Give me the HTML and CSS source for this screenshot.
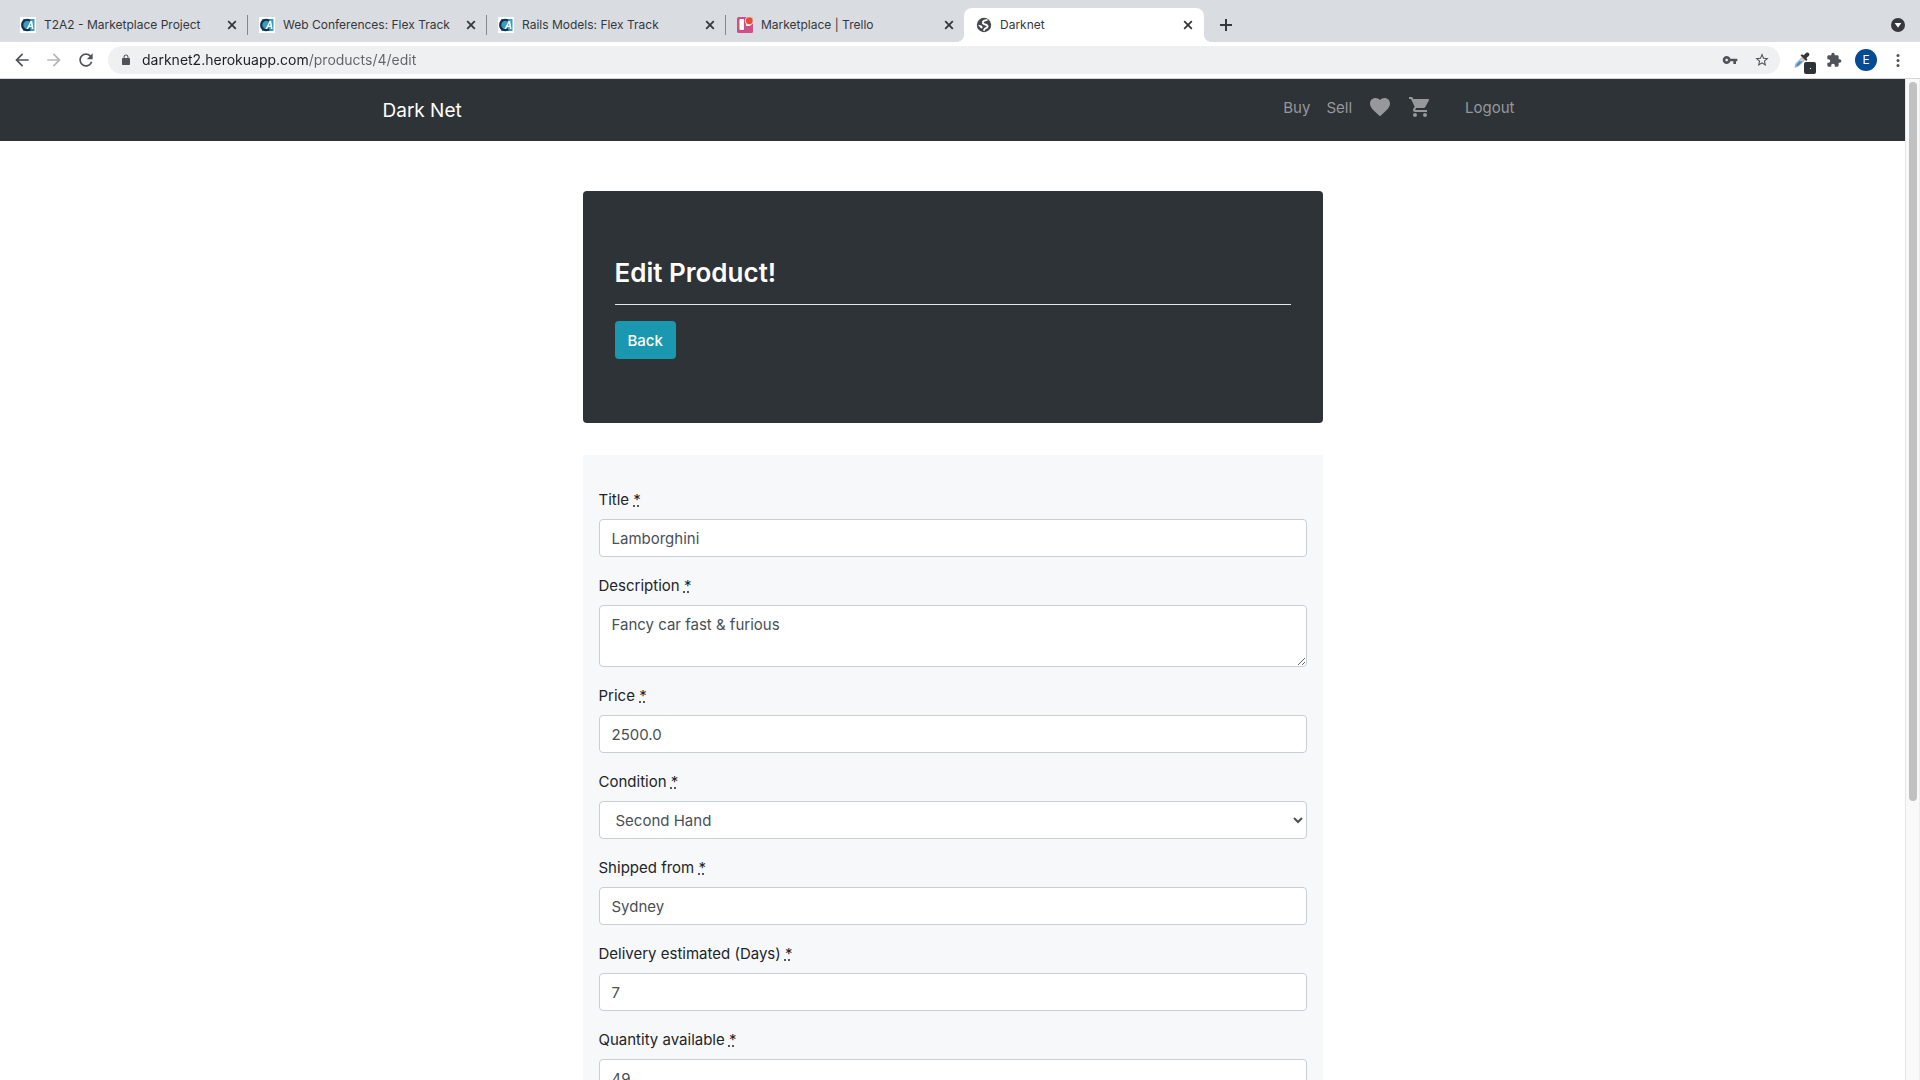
FILE: index.html
```html
<!DOCTYPE html>
<html lang="en">
<head>
<meta charset="utf-8">
<title>Darknet</title>
<link rel="stylesheet" href="styles.css">
</head>
<body>
<svg class="defs" aria-hidden="true">
  <symbol id="ca" viewBox="0 0 16 16">
    <path fill="#fff" d="M0 0h16v16H0z"/>
    <path fill="#3a9cc0" d="M3 2h11.500v12H3z"/>
    <path fill="none" stroke="#15304d" stroke-width="2.200" d="M10 3.500C6 1.500 2.200 4 2.200 8s4 6.500 8 4.200"/>
    <path fill="#fff" fill-rule="evenodd" d="M6.500 12 10.600 4h1.600l1.300 8h-1.600l-.3-1.900H9L8.100 12zM9.700 8.800h1.700L11 6z"/>
  </symbol>
  <symbol id="close" viewBox="0 0 16 16"><path fill="none" stroke="currentColor" stroke-width="1.800" d="m4.200 4.200 7.600 7.600m0-7.600-7.600 7.600"/></symbol>
</svg>

<header class="browser">
  <div class="tabs" role="tablist">
    <div class="tab" role="tab"><svg class="icon16"><use href="#ca"/></svg><span class="tab-title">T2A2 - Marketplace Project</span><button class="tab-close" aria-label="Close tab"><svg class="icon16"><use href="#close"/></svg></button></div>
    <div class="tab" role="tab"><svg class="icon16"><use href="#ca"/></svg><span class="tab-title">Web Conferences: Flex Track</span><button class="tab-close" aria-label="Close tab"><svg class="icon16"><use href="#close"/></svg></button></div>
    <div class="tab" role="tab"><svg class="icon16"><use href="#ca"/></svg><span class="tab-title">Rails Models: Flex Track</span><button class="tab-close" aria-label="Close tab"><svg class="icon16"><use href="#close"/></svg></button></div>
    <div class="tab last" role="tab"><svg class="icon16" viewBox="0 0 16 16"><rect width="16" height="16" rx="1.500" fill="#cd5088"/><rect x="2.500" y="2" width="4.500" height="11" rx="1" fill="#fff"/><rect x="9" y="3" width="4.500" height="6" rx="1" fill="#fff"/><circle cx="12.300" cy="3.700" r="4.500" fill="#dadce0"/><circle cx="12.300" cy="3.700" r="3.400" fill="#eb4a36"/></svg><span class="tab-title">Marketplace | Trello</span><button class="tab-close" aria-label="Close tab"><svg class="icon16"><use href="#close"/></svg></button></div>
    <div class="tab active" role="tab" aria-selected="true"><svg class="icon16" viewBox="0 0 16 16"><circle cx="8" cy="8" r="7.200" fill="#45474d"/><path fill="none" stroke="#fff" stroke-width="1.800" d="M11.500 2.800C9.500 3 7 4 6.800 5.400c-.2 1.200.7 1.600 2 1.900 1.500.4 3 .9 2.800 2.300-.3 1.500-2 1.400-2.800 2.200-.6.600-.5 1-1.300 1.800"/><path fill="#fff" d="m1.900 7.800 3.700.8 1.200 1.600-1.200 1.200-1.200-.6-1-1.200z"/></svg><span class="tab-title">Darknet</span><button class="tab-close" aria-label="Close tab"><svg class="icon16"><use href="#close"/></svg></button></div>
    <button class="new-tab" aria-label="New tab"><svg class="icon16" viewBox="0 0 16 16"><path stroke="currentColor" stroke-width="2" d="M8 2v12M2 8h12"/></svg></button>
    <button class="tab-search" aria-label="Search tabs"><svg class="icon16" viewBox="0 0 16 16"><circle cx="8" cy="8" r="7" fill="#35383c"/><path fill="#fff" d="M4.700 6h6.600L8 10.800z"/></svg></button>
  </div>

  <div class="toolbar">
    <button class="tool" aria-label="Back"><svg class="icon20" viewBox="0 0 24 24"><path d="M20 11H7.830l5.590-5.590L12 4l-8 8 8 8 1.410-1.410L7.830 13H20v-2z"/></svg></button>
    <button class="tool faded" aria-label="Forward"><svg class="icon20" viewBox="0 0 24 24"><path d="m12 4-1.410 1.410L16.170 11H4v2h12.170l-5.580 5.590L12 20l8-8z"/></svg></button>
    <button class="tool" aria-label="Reload"><svg class="icon20" viewBox="0 0 24 24"><path d="M17.650 6.350C16.200 4.900 14.210 4 12 4c-4.420 0-7.990 3.580-7.990 8s3.570 8 7.990 8c3.730 0 6.840-2.550 7.730-6h-2.080c-.82 2.330-3.040 4-5.650 4-3.310 0-6-2.690-6-6s2.690-6 6-6c1.660 0 3.140.69 4.220 1.780L13 11h7V4l-2.350 2.350z"/></svg></button>
    <div class="omnibox">
      <svg class="lock" viewBox="0 0 24 24"><path d="M18 8h-1V6c0-2.760-2.240-5-5-5S7 3.240 7 6v2H6c-1.100 0-2 .9-2 2v10c0 1.100.9 2 2 2h12c1.100 0 2-.9 2-2V10c0-1.100-.9-2-2-2zM9 6c0-1.660 1.340-3 3-3s3 1.340 3 3v2H9V6z"/></svg>
      <input class="url" type="text" aria-label="Address" value="darknet2.herokuapp.com/products/4/edit">
      <button class="tool" aria-label="Passwords"><svg class="icon16" viewBox="0 0 24 24"><path d="M12.650 10C11.830 7.670 9.610 6 7 6c-3.310 0-6 2.690-6 6s2.690 6 6 6c2.610 0 4.830-1.670 5.650-4H17v4h4v-4h2v-4H12.650zM7 14c-1.100 0-2-.9-2-2s.9-2 2-2 2 .9 2 2-.9 2-2 2z"/></svg></button>
      <button class="tool" aria-label="Bookmark"><svg class="icon16" viewBox="0 0 24 24"><path d="M22 9.240l-7.190-.62L12 2 9.190 8.630 2 9.240l5.460 4.730L5.820 21 12 17.270 18.180 21l-1.630-7.030L22 9.240zM12 15.400l-3.760 2.270 1-4.280-3.320-2.880 4.380-.38L12 6.100l1.710 4.040 4.380.38-3.320 2.880 1 4.280L12 15.400z"/></svg></button>
    </div>
    <div class="extensions">
      <button class="tool picker" aria-label="Colour picker"><svg class="icon16" viewBox="0 0 16 16"><path fill="#c9d3d8" stroke="#8f9aa0" stroke-width=".8" d="m8 5.500 2.500 2.500-6 6-3.500 1.300 1-3.800z"/><path fill="#3b8fd0" d="m5.200 9.300 3.500.2-4.500 4.300-1.900.4.400-2z"/><path fill="#3a3531" d="M6.500 3.500 8 2.300l1.700 1L12 .9c1.900-1.500 4.400.7 2.900 2.800L12.500 6l.9 1.700L12.200 9z"/></svg><span class="badge"></span></button>
      <button class="tool" aria-label="Extensions"><svg class="icon16" viewBox="0 0 24 24"><path d="M20.500 11H19V7c0-1.100-.9-2-2-2h-4V3.500C13 2.120 11.880 1 10.500 1S8 2.120 8 3.500V5H4c-1.100 0-1.990.9-1.990 2v3.800H3.500c1.490 0 2.700 1.210 2.700 2.700s-1.210 2.700-2.700 2.700H2V20c0 1.100.9 2 2 2h3.800v-1.500c0-1.490 1.210-2.700 2.700-2.700 1.490 0 2.700 1.210 2.700 2.700V22H17c1.100 0 2-.9 2-2v-4h1.500c1.380 0 2.500-1.120 2.500-2.500S21.880 11 20.500 11z"/></svg></button>
      <button class="avatar" aria-label="Profile">E</button>
      <button class="tool" aria-label="Menu"><svg class="icon16" viewBox="0 0 16 16"><circle cx="8" cy="3.500" r="1.500"/><circle cx="8" cy="8.500" r="1.500"/><circle cx="8" cy="13.500" r="1.500"/></svg></button>
    </div>
  </div>
</header>

<div class="viewport">
  <div class="page">
    <nav class="navbar">
      <div class="container">
        <a class="brand" href="#">Dark Net</a>
        <div class="nav-links">
          <a class="text-link" href="#">Buy</a>
          <a class="text-link" href="#">Sell</a>
          <a href="#" aria-label="Favourites"><svg class="icon24" viewBox="0 0 24 24"><path d="M12 21.350l-1.450-1.320C5.400 15.360 2 12.280 2 8.500 2 5.420 4.420 3 7.500 3c1.740 0 3.410.81 4.500 2.090C13.090 3.810 14.760 3 16.500 3 19.580 3 22 5.420 22 8.500c0 3.780-3.400 6.860-8.550 11.540L12 21.350z"/></svg></a>
          <a href="#" aria-label="Cart"><svg class="icon24" viewBox="0 0 24 24"><path d="M7 18c-1.100 0-1.990.9-1.990 2S5.900 22 7 22s2-.9 2-2-.9-2-2-2zM1 2v2h2l3.600 7.590-1.350 2.450c-.16.280-.25.610-.25.960 0 1.100.9 2 2 2h12v-2H7.420c-.14 0-.25-.11-.25-.25l.03-.12.9-1.630h7.450c.75 0 1.410-.41 1.750-1.030l3.580-6.490A1.003 1.003 0 0020 4H5.210l-.94-2H1zm16 16c-1.100 0-1.990.9-1.990 2s.89 2 1.990 2 2-.9 2-2-.9-2-2-2z"/></svg></a>
          <a class="text-link logout" href="#">Logout</a>
        </div>
      </div>
    </nav>

    <main class="content">
      <section class="hero">
        <h1>Edit Product!</h1>
        <hr>
        <a class="btn" href="#">Back</a>
      </section>
      <form class="product-form">
        <div class="field"><label for="title">Title <abbr title="required">*</abbr></label><input id="title" class="control" type="text" value="Lamborghini"></div>
        <div class="field"><label for="description">Description <abbr title="required">*</abbr></label><textarea id="description" class="control" rows="2">Fancy car fast &amp; furious</textarea></div>
        <div class="field"><label for="price">Price <abbr title="required">*</abbr></label><input id="price" class="control" type="text" value="2500.0"></div>
        <div class="field"><label for="condition">Condition <abbr title="required">*</abbr></label><select id="condition" class="control"><option>Second Hand</option></select></div>
        <div class="field"><label for="shipped">Shipped from <abbr title="required">*</abbr></label><input id="shipped" class="control" type="text" value="Sydney"></div>
        <div class="field"><label for="delivery">Delivery estimated (Days) <abbr title="required">*</abbr></label><input id="delivery" class="control" type="text" value="7"></div>
        <div class="field"><label for="quantity">Quantity available <abbr title="required">*</abbr></label><input id="quantity" class="control" type="text" value="49"></div>
      </form>
    </main>
  </div>
  <div class="scrollbar"><div class="thumb"></div></div>
</div>
</body>
</html>
```
FILE: styles.css
```css
* { box-sizing: border-box; }

body {
  margin: 0;
  height: 100vh;
  display: flex;
  flex-direction: column;
  overflow: hidden;
  background: #fff;
  color: #212529;
  font-family: Inter, "Liberation Sans", sans-serif;
  font-size: 15px;
  line-height: 24px;
}

button, input, select, textarea { font: inherit; color: inherit; }
button { border: 0; padding: 0; background: none; display: flex; align-items: center; justify-content: center; }
svg { display: block; flex: none; fill: currentColor; }
a { text-decoration: none; }

.defs { position: absolute; width: 0; height: 0; }
.icon16 { width: 16px; height: 16px; }
.icon20 { width: 20px; height: 20px; }
.icon24 { width: 24px; height: 24px; }

/* Browser frame */
.browser { flex: none; border-bottom: 1px solid #d3d5d8; }

.tabs {
  display: flex;
  height: 42px;
  padding: 8px 14px 0 8px;
  background: #d9dce1;
  color: #35383c;
  font-size: 12px;
}

.tab {
  position: relative;
  display: flex;
  align-items: center;
  gap: 8px;
  width: 239px;
  padding: 0 7px 0 12px;
}
.tab-title { flex: 1; white-space: nowrap; overflow: hidden; }
.tab::after {
  content: "";
  position: absolute;
  right: -1px;
  top: 7px;
  width: 1px;
  height: 20px;
  background: #84878b;
}
.tab.last::after { display: none; }
.tab.active { width: 240px; padding-right: 8px; background: #fff; border-radius: 8px 8px 0 0; }
.tab.active::before,
.tab.active::after {
  content: "";
  position: absolute;
  top: auto;
  bottom: 0;
  width: 8px;
  height: 8px;
}
.tab.active::before { left: -8px; background: radial-gradient(circle at 0 0, transparent 8px, #fff 8px); }
.tab.active::after { right: -8px; background: radial-gradient(circle at 100% 0, transparent 8px, #fff 8px); }

.new-tab { padding: 0 14px; }
.tab-search { margin-left: auto; }

.toolbar {
  display: flex;
  align-items: center;
  height: 36px;
  padding: 0 14px 0 12px;
  color: #505357;
}
.toolbar > .tool { margin-right: 12px; }
.faded { color: #b4b6b9; }

.omnibox {
  flex: 1;
  display: flex;
  align-items: center;
  gap: 16px;
  height: 28px;
  padding: 0 10px;
  border-radius: 14px;
  background: #eff0f2;
}
.lock { width: 12px; height: 12px; margin: 0 -6px 0 2px; }
.url {
  flex: 1;
  min-width: 0;
  border: 0;
  padding: 0;
  font-size: 14px;
  color: transparent;
  background: linear-gradient(90deg, #1d1f22 166px, #606367 166px);
  background-clip: text;
  outline: 0;
}

.extensions { display: flex; align-items: center; gap: 16px; margin-left: 14px; }
.picker { position: relative; }
.badge {
  position: absolute;
  left: 10px;
  top: 10px;
  display: grid;
  place-content: center;
  width: 12px;
  height: 12px;
  border-radius: 2px;
  background: #2e3338;
}
.badge::after { content: ""; width: 1px; height: 1px; background: #fff; }
.avatar {
  width: 22px;
  height: 22px;
  margin: 0 -3px;
  border-radius: 50%;
  background: #034b93;
  color: #fff;
  font-size: 12px;
}

/* Page */
.viewport { flex: 1; min-height: 0; display: flex; }
.page { flex: 1; overflow: hidden; }

.navbar { padding: 8px 0; background: #2e3338; }
.container {
  display: flex;
  justify-content: space-between;
  max-width: 1140px;
  min-height: 46px;
  margin: 0 auto;
}
.brand { align-self: center; padding-top: 2px; color: #fff; font-size: 19px; }
.nav-links { display: flex; align-items: center; height: 40px; }
.nav-links a { padding: 0 8px; color: #97989b; }
.nav-links .text-link { padding-top: 2px; }
.nav-links .logout { margin-left: 17px; }

.content { max-width: 740px; margin: 50px auto 0; }

.hero { padding: 65px 32px 64px; border-radius: 4px; background: #2e3338; color: #fff; }
.hero h1 { margin: 0 0 14px; font-size: 26px; line-height: 34px; font-weight: 600; }
.hero hr { margin: 0 0 16px; border: 0; border-top: 1px solid #e6e7e8; }
.btn {
  display: inline-block;
  padding: 8px 13px 6px;
  border-radius: 4px;
  background: #1a98b0;
  color: #fff;
  font-weight: 500;
  vertical-align: top;
}

.product-form { margin-top: 32px; padding: 32px 16px 16px; background: #f7f8fa; }
.field { margin-bottom: 16px; }
.field label { display: block; padding-top: 1px; margin-bottom: 7px; }
.control {
  display: block;
  width: 100%;
  height: 38px;
  padding: 6px 12px;
  border: 1px solid #c8ced6;
  border-radius: 4px;
  background: #fff;
  color: #495057;
}
textarea.control { height: 62px; padding-top: 7px; resize: vertical; }

.scrollbar {
  width: 15px;
  padding: 3px 2px 0 3px;
  border-left: 1px solid #e6e6e6;
  border-right: 1px solid #eeeeee;
  background: #f9f9f9;
}
.thumb { width: 8px; height: 72%; border-radius: 4px; background: #c1c1c1; }
```
